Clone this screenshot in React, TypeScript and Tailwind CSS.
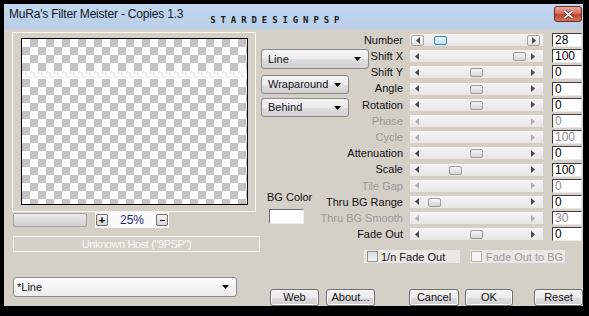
import React from "react";

const sliders = [
  { label: "Number", value: "28", pos: 24, enabled: true, focus: true },
  { label: "Shift X", value: "100", pos: 103, enabled: true },
  { label: "Shift Y", value: "0", pos: 60, enabled: true },
  { label: "Angle", value: "0", pos: 60, enabled: true },
  { label: "Rotation", value: "0", pos: 60, enabled: true },
  { label: "Phase", value: "0", pos: null, enabled: false },
  { label: "Cycle", value: "100", pos: null, enabled: false },
  { label: "Attenuation", value: "0", pos: 60, enabled: true },
  { label: "Scale", value: "100", pos: 39, enabled: true },
  { label: "Tile Gap", value: "0", pos: null, enabled: false },
  { label: "Thru BG Range", value: "0", pos: 18, enabled: true },
  { label: "Thru BG Smooth", value: "30", pos: null, enabled: false },
  { label: "Fade Out", value: "0", pos: 60, enabled: true },
];

const Arrow = ({ dir, light }: { dir: "left" | "right"; light?: boolean }) => (
  <svg width="4" height="7" viewBox="0 0 4 7">
    <path
      d={dir === "left" ? "M4 0 L0 3.5 L4 7 Z" : "M0 0 L4 3.5 L0 7 Z"}
      fill={light ? "#b0b0b0" : "#4a4a4a"}
    />
  </svg>
);

const DownArrow = () => (
  <svg width="7" height="4" viewBox="0 0 7 4">
    <path d="M0 0 H7 L3.5 4 Z" fill="#000" />
  </svg>
);

const Combo = ({ text, className }: { text: string; className: string }) => (
  <div
    className={`flex items-center justify-between pl-[6px] pr-[7px] border border-[#8a8a8a] rounded-[3px] bg-[linear-gradient(#f4f4f4_0%,#ececec_50%,#dedede_51%,#d2d2d2_100%)] text-[11px] text-[#111] ${className}`}
  >
    <span>{text}</span>
    <DownArrow />
  </div>
);

const Button = ({ text, className }: { text: string; className: string }) => (
  <div
    className={`flex items-center justify-center h-[17px] border border-[#707070] rounded-[3px] bg-[linear-gradient(#f2f2f2_0%,#ebebeb_50%,#dddddd_51%,#cfcfcf_100%)] shadow-[inset_0_0_0_1px_#fcfcfc] text-[11px] text-[#111] ${className}`}
  >
    {text}
  </div>
);

const Track = ({ pos, focus, enabled }: { pos: number | null; focus?: boolean; enabled: boolean }) => (
  <div className="relative flex items-center justify-between w-[133px] h-[12px] bg-[linear-gradient(#f5f5f5,#e6e6e6)]">
    {focus ? (
      <div className="flex items-center justify-center w-[13px] h-[11px] ml-[1px] border border-[#a3a3a3] rounded-[2px] bg-[linear-gradient(#fafafa,#e2e2e2)]">
        <Arrow dir="left" />
      </div>
    ) : (
      <div className="flex justify-center w-[14px]">
        <Arrow dir="left" light={!enabled} />
      </div>
    )}
    {focus ? (
      <div className="flex items-center justify-center w-[13px] h-[11px] mr-[3px] border border-[#a3a3a3] rounded-[2px] bg-[linear-gradient(#fafafa,#e2e2e2)]">
        <Arrow dir="right" />
      </div>
    ) : (
      <div className="flex justify-center w-[14px] mr-[3px]">
        <Arrow dir="right" light={!enabled} />
      </div>
    )}
    {/* thumb sits on the track */}
    {pos !== null && (
      <div
        className={`absolute top-[2px] w-[13px] h-[9px] rounded-[2px] border ${
          focus
            ? "border-[#3c7fb1] bg-[linear-gradient(#eaf6fd,#bee6fd)]"
            : "border-[#9c9c9c] bg-[linear-gradient(#f7f7f7,#d5d5d5)]"
        }`}
        style={{ left: pos }}
      />
    )}
  </div>
);

// white strip of "copies" across the preview
const CopiesBand = () => {
  let d = "";
  for (let x = 0; x < 226; x += 8) d += `M${x} 2 h4 v4 h4 `;
  return (
    <svg className="absolute left-0 top-[32px]" width="225" height="8" viewBox="0 0 225 8">
      <rect x="0" y="0" width="225" height="8" fill="#fdfdfd" />
      <path d={d} stroke="#e0e0e0" strokeWidth="1" fill="none" />
    </svg>
  );
};

export default function App() {
  return (
    <div className="w-[589px] h-[316px] bg-black pt-[4px] pl-[4px] pr-[6px] pb-[10px] font-['Liberation_Sans',Arial,sans-serif]">
      <div className="w-[579px] h-[302px] flex flex-col">
        {/* Title bar */}
        <div className="flex items-start h-[25px] bg-[linear-gradient(#c3d7ee,#b8cfe9)]">
          <span className="pl-[5px] pt-[3px] text-[12px] leading-[14px] tracking-[-0.2px] text-[#10182a]">
            MuRa's Filter Meister - Copies 1.3
          </span>
          <span className="ml-[27px] pt-[11px] text-[9px] leading-[10px] font-bold tracking-[4.9px] text-[#1a1a1a] font-['DejaVu_Sans_Mono',monospace]">
            STARDESIGNPSP
          </span>
          <div className="ml-auto mr-[1px] mt-[2px] flex items-center justify-center w-[28px] h-[16px] rounded-[3px] border border-[#6d2b22] bg-[linear-gradient(#e9a99b_0%,#d4715e_45%,#c1452f_55%,#d6735f_100%)]">
            <svg width="11" height="9" viewBox="0 0 11 9">
              <path d="M1.5 1 L9.5 8 M9.5 1 L1.5 8" stroke="#5a2018" strokeWidth="3.2" />
              <path d="M1.5 1 L9.5 8 M9.5 1 L1.5 8" stroke="#ffffff" strokeWidth="1.8" />
            </svg>
          </div>
        </div>

        {/* Dialog body */}
        <div className="flex flex-col h-[277px] bg-[#d4d0c8] text-[11px]">
          <div className="flex h-[241px]">
            {/* Preview column */}
            <div className="flex flex-col w-[257px] pl-[8px]">
              <div className="mt-[3px] w-[244px] h-[180px] border border-[#f6f6f4] pl-[8px] pt-[5px]">
                <div className="relative w-[227px] h-[167px] border border-black bg-[repeating-conic-gradient(#c3c3c3_0%_25%,#ffffff_0%_50%)] bg-[length:16px_16px]">
                  <CopiesBand />
                </div>
              </div>
              <div className="flex items-center h-[16px]">
                <div className="ml-[1px] w-[74px] h-[14px] rounded-[2px] border border-[#a4a4a4] bg-[linear-gradient(#ececec,#cfcfcf)]" />
                <div className="ml-[8px] flex items-center justify-between w-[74px] h-[16px] bg-[#fbfbfb] px-[1px]">
                  <div className="flex items-center justify-center w-[12px] h-[12px] border border-[#707070] rounded-[2px] bg-[linear-gradient(#f4f4f4,#d6d6d6)] text-[11px] leading-none font-bold">
                    +
                  </div>
                  <span className="text-[12px] text-[#1c2a7c]">25%</span>
                  <div className="flex items-center justify-center w-[12px] h-[12px] border border-[#707070] rounded-[2px] bg-[linear-gradient(#f4f4f4,#d6d6d6)]">
                    <div className="w-[5px] h-[1px] bg-black" />
                  </div>
                </div>
              </div>
              <div className="mt-[8px] ml-[1px] flex items-center justify-center w-[247px] h-[16px] border border-[#f4f4f2] text-[11px] tracking-[-0.4px] text-[#f8f8f8]">
                Unknown Host ("9PSP")
              </div>
            </div>

            {/* Mode column */}
            <div className="flex flex-col w-[108px]">
              <Combo text="Line" className="mt-[20px] w-[108px] h-[20px]" />
              <Combo text="Wraparound" className="mt-[6px] w-[88px] h-[19px]" />
              <Combo text="Behind" className="mt-[4px] w-[88px] h-[19px]" />
              <span className="mt-[74px] ml-[6px] leading-[13px] text-[#111]">BG Color</span>
              <div className="mt-[5px] ml-[8px] w-[35px] h-[15px] bg-white border-t border-l border-[#6e6e6e] border-r border-b border-r-[#f0f0f0] border-b-[#f0f0f0]" />
            </div>

            {/* Slider column */}
            <div className="flex flex-col w-[214px] pt-[3px]">
              {sliders.map((s) => (
                <div key={s.label} className="flex items-center h-[16.2px]">
                  <div className="flex justify-end w-[34px] whitespace-nowrap">
                    <span className={s.enabled ? "text-[#111]" : "text-[#9a9a9a]"}>{s.label}</span>
                  </div>
                  <div className="ml-[7px]">
                    <Track pos={s.pos} focus={s.focus} enabled={s.enabled} />
                  </div>
                  <div
                    className={`ml-[9px] flex items-center w-[30px] h-[14px] pl-[2px] bg-white border-t border-l border-[#404040] border-r border-b border-r-[#e8e8e8] border-b-[#e8e8e8] text-[12px] ${
                      s.enabled ? "text-black" : "text-[#8c8c8c]"
                    }`}
                  >
                    {s.value}
                  </div>
                </div>
              ))}
              <div className="flex items-center mt-[8px] -ml-[5px] h-[13px] whitespace-nowrap">
                <div className="flex items-center w-[96px] h-[13px] bg-[#e9e8e4] pl-[3px]">
                  <div className="w-[11px] h-[11px] border border-[#8e8f8f] bg-[linear-gradient(#dcdcdc,#f6f6f6)]" />
                  <span className="ml-[3px] text-[#111]">1/n Fade Out</span>
                </div>
                <div className="flex items-center ml-[10px] w-[95px] h-[13px] bg-[#e9e8e4] pl-[1px]">
                  <div className="w-[11px] h-[11px] border border-[#b4b4b4] bg-[#f4f4f4]" />
                  <span className="ml-[4px] text-[#9a9a9a]">Fade Out to BG</span>
                </div>
              </div>
            </div>
          </div>

          {/* Preset + buttons */}
          <div className="flex items-start h-[36px]">
            <div className="mt-[7px] ml-[9px] flex items-center justify-between w-[224px] h-[20px] pl-[3px] pr-[7px] border border-[#8a8a8a] rounded-[3px] bg-[linear-gradient(#fdfdfd,#ececec)] text-[#111]">
              <span>*Line</span>
              <DownArrow />
            </div>
            <Button text="Web" className="mt-[19px] ml-[33px] w-[49px]" />
            <Button text="About..." className="mt-[19px] ml-[7px] w-[49px]" />
            <Button text="Cancel" className="mt-[19px] ml-[34px] w-[50px]" />
            <Button text="OK" className="mt-[19px] ml-[6px] w-[48px]" />
            <Button text="Reset" className="mt-[19px] ml-[21px] w-[49px]" />
          </div>
        </div>
      </div>
    </div>
  );
}
